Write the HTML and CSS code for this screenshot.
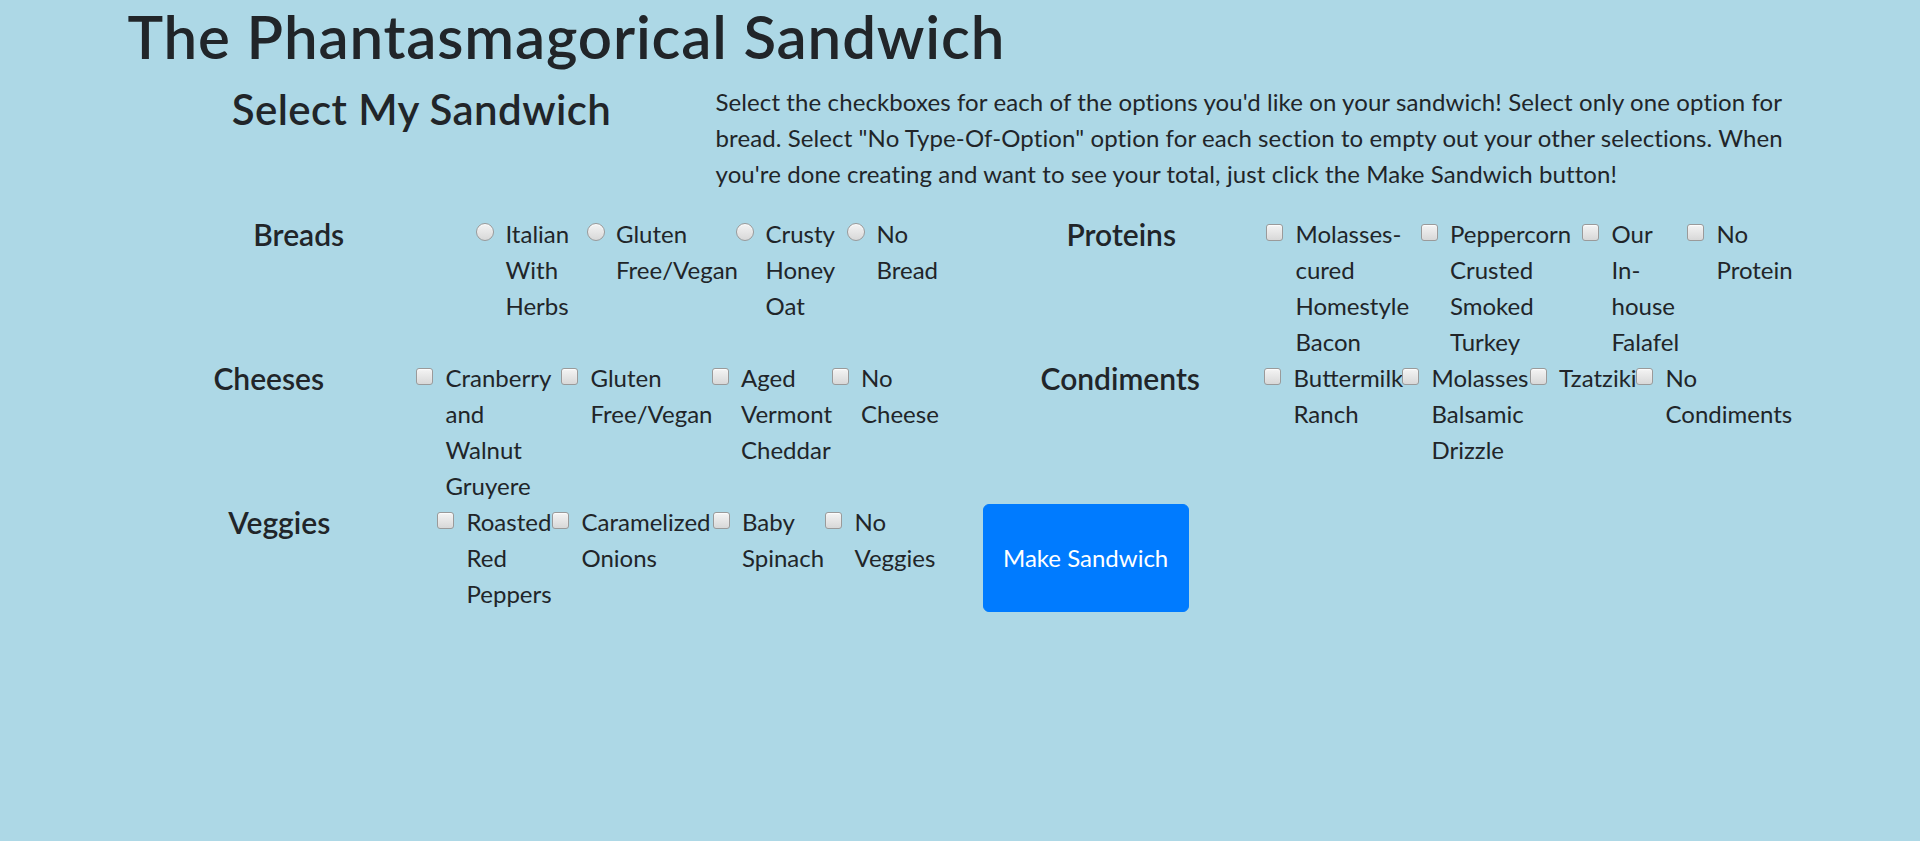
FILE: index.html
```html
<!DOCTYPE html>
<html lang="en">
<head>
<meta charset="utf-8">
<title>The Phantasmagorical Sandwich</title>
<link rel="stylesheet" href="styles.css">
</head>
<body>
<div class="container">
  <h1 class="title">The Phantasmagorical Sandwich</h1>
  <div class="intro">
    <h3 class="intro-title">Select My Sandwich</h3>
    <p class="intro-text">Select the checkboxes for each of the options you'd like on your sandwich! Select only one option for bread. Select "No Type-Of-Option" option for each section to empty out your other selections. When you're done creating and want to see your total, just click the Make Sandwich button!</p>
  </div>
  <div class="menu">
    <div class="group group-breads">
      <h5 class="group-title">Breads</h5>
      <div class="opt"><input type="radio" name="bread" class="radio"><label class="opt-label">Italian With Herbs</label></div>
      <div class="opt"><input type="radio" name="bread" class="radio"><label class="opt-label">Gluten Free/Vegan</label></div>
      <div class="opt"><input type="radio" name="bread" class="radio"><label class="opt-label">Crusty Honey Oat</label></div>
      <div class="opt opt-last"><input type="radio" name="bread" class="radio"><label class="opt-label">No Bread</label></div>
    </div>
    <div class="group group-proteins">
      <h5 class="group-title">Proteins</h5>
      <div class="opt"><input type="checkbox" class="check"><label class="opt-label">Molasses-cured Homestyle Bacon</label></div>
      <div class="opt"><input type="checkbox" class="check"><label class="opt-label">Peppercorn Crusted Smoked Turkey</label></div>
      <div class="opt"><input type="checkbox" class="check"><label class="opt-label">Our In-house Falafel</label></div>
      <div class="opt opt-last"><input type="checkbox" class="check"><label class="opt-label">No Protein</label></div>
    </div>
    <div class="group group-cheeses">
      <h5 class="group-title">Cheeses</h5>
      <div class="opt"><input type="checkbox" class="check"><label class="opt-label">Cranberry and Walnut Gruyere</label></div>
      <div class="opt"><input type="checkbox" class="check"><label class="opt-label">Gluten Free/Vegan</label></div>
      <div class="opt"><input type="checkbox" class="check"><label class="opt-label">Aged Vermont Cheddar</label></div>
      <div class="opt opt-last"><input type="checkbox" class="check"><label class="opt-label">No Cheese</label></div>
    </div>
    <div class="group group-condiments">
      <h5 class="group-title">Condiments</h5>
      <div class="opt"><input type="checkbox" class="check"><label class="opt-label">Buttermilk Ranch</label></div>
      <div class="opt"><input type="checkbox" class="check"><label class="opt-label">Molasses Balsamic Drizzle</label></div>
      <div class="opt"><input type="checkbox" class="check"><label class="opt-label">Tzatziki</label></div>
      <div class="opt opt-last"><input type="checkbox" class="check"><label class="opt-label">No Condiments</label></div>
    </div>
    <div class="group group-veggies">
      <h5 class="group-title">Veggies</h5>
      <div class="opt"><input type="checkbox" class="check"><label class="opt-label">Roasted Red Peppers</label></div>
      <div class="opt"><input type="checkbox" class="check"><label class="opt-label">Caramelized Onions</label></div>
      <div class="opt"><input type="checkbox" class="check"><label class="opt-label">Baby Spinach</label></div>
      <div class="opt opt-last"><input type="checkbox" class="check"><label class="opt-label">No Veggies</label></div>
    </div>
    <div class="actions">
      <button type="button" class="btn-make">Make Sandwich</button>
    </div>
  </div>
</div>
</body>
</html>
```

FILE: styles.css
```css
html, body {
  margin: 0;
  padding: 0;
}

body {
  background: #add8e6;
  color: #212529;
  font-family: "Lato", "Open Sans", sans-serif;
  font-size: 24px;
  line-height: 36px;
  min-height: 841px;
}

.container {
  width: 1665px;
  margin: 0 auto;
}

.title {
  font-size: 60px;
  line-height: 72px;
  font-weight: 600;
  letter-spacing: 0.85px;
  margin: 0 0 12px;
}

.intro {
  display: flex;
}

.intro-title {
  flex: 1;
  margin: 0 0 12px;
  text-align: center;
  font-size: 42px;
  line-height: 50px;
  font-weight: 600;
  letter-spacing: 0.4px;
}

.intro-text {
  width: 1077px;
  margin: 0 0 24px;
  letter-spacing: 0.1px;
}

.menu {
  display: grid;
  grid-template-columns: 810px 810px;
  column-gap: 45px;
  align-items: start;
}

.group {
  display: grid;
}

.group-breads { grid-template-columns: 1fr 110.5px 149.5px 111px 90.5px; }
.group-proteins { grid-template-columns: 1fr 154.5px 161.5px 105px 105.5px; }
.group-cheeses { grid-template-columns: 1fr 145px 150.5px 120px 106px; }
.group-condiments { grid-template-columns: 1fr 138px 127.5px 106.5px 156.5px; }
.group-veggies { grid-template-columns: 1fr 115px 160.5px 112.5px 112.5px; }

.group-title {
  margin: 0;
  font-size: 30px;
  line-height: 36px;
  font-weight: 600;
  text-align: center;
  padding-right: 6px;
}

.opt {
  display: flex;
  align-items: flex-start;
}

.opt-label {
  flex: 1;
  min-width: 0;
  padding-right: 6px;
}

.opt-last .opt-label {
  padding-right: 0;
}

.radio,
.check {
  -webkit-appearance: none;
  appearance: none;
  flex: none;
  box-sizing: border-box;
  margin: 0 11.5px 0 0;
  background: linear-gradient(#f4f4f4, #d8d8d8);
  border: 1px solid #9a9a9a;
  box-shadow: inset 0 1px 1px rgba(255, 255, 255, 0.8);
}

.radio {
  width: 18px;
  height: 18px;
  margin-top: 7px;
  border-radius: 50%;
}

.check {
  width: 17px;
  height: 17px;
  margin-top: 8px;
  margin-right: 12.5px;
  border-radius: 3px;
}

.actions {
  display: flex;
  align-self: stretch;
}

.btn-make {
  font-family: inherit;
  font-size: 24px;
  line-height: 36px;
  color: #fff;
  background: #007bff;
  border: 1.5px solid #007bff;
  border-radius: 6px;
  padding: 0 19.5px;
  cursor: pointer;
}
```
